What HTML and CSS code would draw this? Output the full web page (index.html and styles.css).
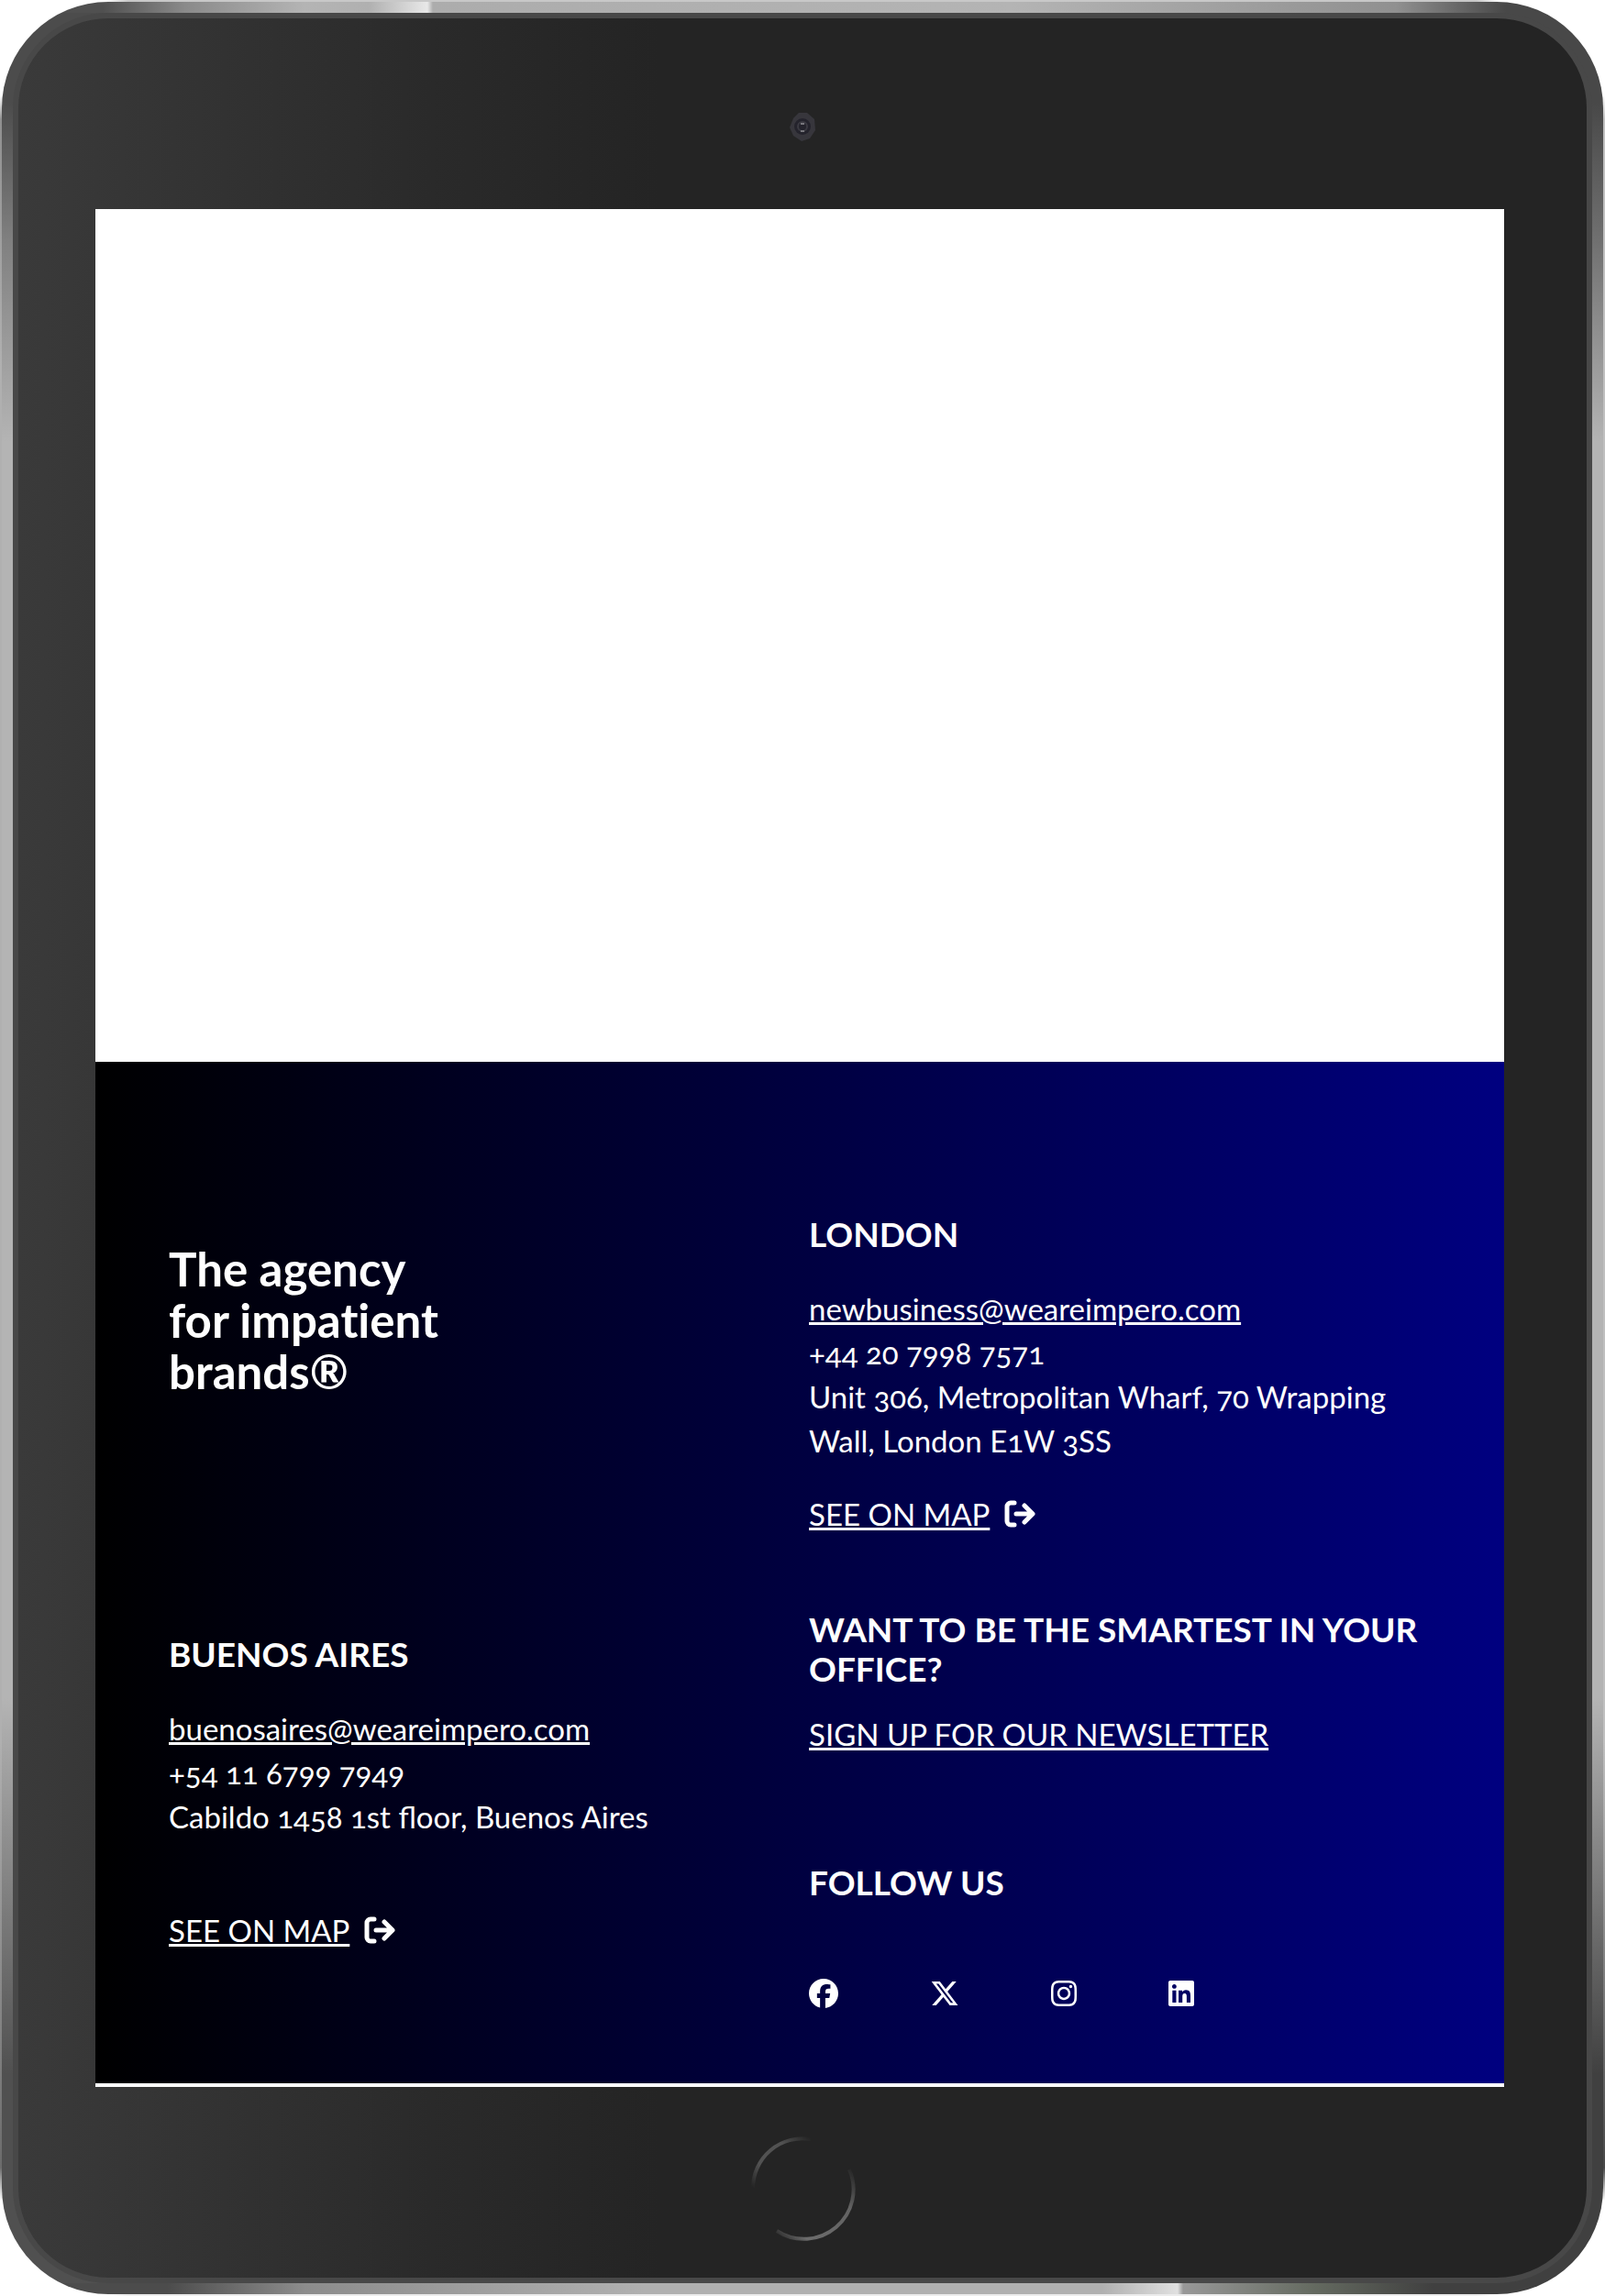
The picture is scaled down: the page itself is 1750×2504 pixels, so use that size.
FILE: index.html
```html
<!DOCTYPE html>
<html lang="en">
<head>
<meta charset="utf-8">
<meta name="viewport" content="width=device-width, initial-scale=1">
<title>Impero</title>
<link rel="stylesheet" href="styles.css">
</head>
<body>
<div class="tablet">
  <div class="rim">
    <div class="bezel">
      <div class="bezel-top">
        <svg class="camera" width="34" height="36" viewBox="0 0 34 36" aria-hidden="true">
          <path d="M13 2h9l8 7 1 12-6 9-9 3-9-6-4-9 4-10z" fill="#37363c"/>
          <circle cx="17" cy="17" r="9" fill="#24232c"/>
          <circle cx="17" cy="17" r="5" fill="none" stroke="#3b3a42" stroke-width="2"/>
          <path d="M15 14h4M15 22h4" stroke="#77767c" stroke-width="2"/>
        </svg>
      </div>
      <div class="screen">
        <main class="blank"></main>
        <footer class="footer">
          <div class="column column-left">
            <h1 class="tagline">The agency<br>for impatient<br>brands®</h1>
            <section class="office office-ba">
              <h2 class="heading">BUENOS AIRES</h2>
              <address class="details">
                <a href="mailto:buenosaires@weareimpero.com">buenosaires@weareimpero.com</a><br>
                +54 11 6799 7949<br>
                Cabildo 1458 1st floor, Buenos Aires
              </address>
              <p class="map"><a href="#map-ba">SEE ON MAP</a>
                <svg class="map-icon" width="34" height="30" viewBox="0 0 34 30" aria-hidden="true"><path d="M11 3H7a4 4 0 0 0-4 4v16a4 4 0 0 0 4 4h4M13 15h17M22 6l9 9-9 9"/></svg></p>
            </section>
          </div>
          <div class="column column-right">
            <section class="office">
              <h2 class="heading">LONDON</h2>
              <address class="details">
                <a href="mailto:newbusiness@weareimpero.com">newbusiness@weareimpero.com</a><br>
                +44 20 7998 7571<br>
                Unit 306, Metropolitan Wharf, 70 Wrapping<br>
                Wall, London E1W 3SS
              </address>
              <p class="map"><a href="#map-london">SEE ON MAP</a>
                <svg class="map-icon" width="34" height="30" viewBox="0 0 34 30" aria-hidden="true"><path d="M11 3H7a4 4 0 0 0-4 4v16a4 4 0 0 0 4 4h4M13 15h17M22 6l9 9-9 9"/></svg></p>
            </section>
            <section class="newsletter">
              <h2 class="heading">WANT TO BE THE SMARTEST IN YOUR<br>OFFICE?</h2>
              <p class="signup"><a href="#newsletter">SIGN UP FOR OUR NEWSLETTER</a></p>
            </section>
            <section class="follow">
              <h2 class="heading">FOLLOW US</h2>
              <nav class="social" aria-label="Social media">
                <a href="#facebook" aria-label="Facebook"><svg width="32" height="32" viewBox="0 0 512 512"><path d="M512 256C512 114.600 397.400 0 256 0S0 114.600 0 256c0 120 82.700 220.800 194.200 248.500V334.200h-52.800V256h52.800v-33.700c0-87.100 39.400-127.500 125-127.500 16.200 0 44.200 3.200 55.700 6.400V172c-6-.6-16.500-1-29.600-1-42 0-58.200 15.900-58.200 57.200V256h83.600l-14.400 78.200h-69.300v175.900C413.800 494.800 512 386.900 512 256z"/></svg></a>
                <a href="#x" aria-label="X"><svg width="32" height="32" viewBox="0 0 512 512"><path d="M389.200 48h70.600L305.600 224.200 487 464H345L233.700 318.600 106.500 464H35.800l164.900-188.500L26.800 48h145.600l100.500 132.900zm-24.800 373.800h39.100L151.100 88h-42z"/></svg></a>
                <a href="#instagram" aria-label="Instagram"><svg width="28" height="32" viewBox="0 0 448 512"><path d="M224.100 141c-63.600 0-114.900 51.300-114.900 114.900S160.500 370.800 224.100 370.800 339 319.500 339 255.900 287.700 141 224.100 141zm0 189.600c-41.100 0-74.700-33.500-74.700-74.700s33.500-74.700 74.700-74.700 74.700 33.500 74.700 74.700-33.600 74.700-74.700 74.700zm146.400-194.300c0 14.900-12 26.800-26.800 26.800-14.900 0-26.800-12-26.800-26.800s12-26.800 26.800-26.800 26.800 12 26.800 26.800zm76.100 27.200c-1.700-35.900-9.900-67.700-36.200-93.900-26.200-26.200-58-34.400-93.900-36.200-37-2.100-147.900-2.100-184.900 0-35.800 1.700-67.600 9.900-93.900 36.100s-34.400 58-36.200 93.900c-2.100 37-2.100 147.900 0 184.900 1.700 35.900 9.900 67.700 36.200 93.900s58 34.400 93.900 36.200c37 2.100 147.900 2.100 184.900 0 35.900-1.700 67.700-9.900 93.900-36.200 26.200-26.200 34.400-58 36.200-93.900 2.100-37 2.100-147.800 0-184.800zM398.800 388c-7.800 19.600-22.900 34.700-42.600 42.600-29.500 11.700-99.500 9-132.100 9s-102.700 2.600-132.100-9c-19.600-7.800-34.700-22.900-42.600-42.600-11.700-29.500-9-99.500-9-132.100s-2.600-102.700 9-132.100c7.800-19.600 22.900-34.700 42.600-42.600 29.500-11.700 99.500-9 132.100-9s102.700-2.600 132.100 9c19.600 7.800 34.700 22.900 42.600 42.600 11.700 29.500 9 99.500 9 132.100s2.700 102.700-9 132.100z"/></svg></a>
                <a href="#linkedin" aria-label="LinkedIn"><svg width="28" height="32" viewBox="0 0 448 512"><path d="M416 32H31.900C14.300 32 0 46.500 0 64.300v383.400C0 465.500 14.300 480 31.900 480H416c17.600 0 32-14.500 32-32.300V64.300c0-17.800-14.400-32.300-32-32.300zM135.400 416H69V202.200h66.500V416zm-33.200-243c-21.300 0-38.500-17.300-38.500-38.500S80.900 96 102.200 96c21.200 0 38.500 17.300 38.500 38.500 0 21.300-17.200 38.500-38.500 38.500zm282.100 243h-66.400V312c0-24.800-.5-56.700-34.500-56.700-34.600 0-39.900 27-39.900 54.900V416h-66.400V202.200h63.700v29.200h.9c8.900-16.800 30.600-34.500 62.900-34.500 67.200 0 79.700 44.300 79.700 101.900V416z"/></svg></a>
              </nav>
            </section>
          </div>
        </footer>
      </div>
      <div class="bezel-bottom">
        <svg class="home" width="116" height="116" viewBox="0 0 116 116" aria-hidden="true">
          <defs>
            <linearGradient id="arc-a" x1="0" y1="1" x2="1" y2="0"><stop offset="0" stop-color="#242424"/><stop offset=".3" stop-color="#525252"/><stop offset=".7" stop-color="#525252"/><stop offset="1" stop-color="#242424"/></linearGradient>
            <linearGradient id="arc-b" x1="1" y1="0" x2="0" y2="1"><stop offset="0" stop-color="#242424"/><stop offset=".3" stop-color="#626262"/><stop offset=".8" stop-color="#6c6c6c"/><stop offset="1" stop-color="#242424"/></linearGradient>
          </defs>
          <path d="M4 58A54 54 0 0 1 67 5" fill="none" stroke="url(#arc-a)" stroke-width="4"/>
          <path d="M109 38A54 54 0 0 1 30 105" fill="none" stroke="url(#arc-b)" stroke-width="4"/>
        </svg>
      </div>
    </div>
  </div>
</div>
</body>
</html>
```
FILE: styles.css
```css
* { box-sizing: border-box; }

body {
  margin: 0;
  background: #fff;
  color: #fff;
  font-family: Lato, sans-serif;
}

h1, h2, p { margin: 0; }
a { color: inherit; }

/* Tablet shell: the thin outer highlight shows between the rounded corners */
.tablet {
  padding: 2px;
  background:
    linear-gradient(90deg, transparent 114px, #c8c8c8 140px, #c8c8c8 calc(100% - 140px), transparent calc(100% - 114px)) top / 100% 2px no-repeat,
    linear-gradient(90deg, transparent 114px, #ececec 140px, #ececec calc(100% - 140px), transparent calc(100% - 114px)) bottom / 100% 2px no-repeat,
    linear-gradient(180deg, transparent 104px, #909090 130px, #b0b0b0 400px, #b0b0b0 1900px, #6c6c6c calc(100% - 140px), transparent calc(100% - 104px)) left / 2px 100% no-repeat,
    linear-gradient(180deg, transparent 104px, #c0c0c0 130px, #c0c0c0 1900px, #484848 calc(100% - 140px), transparent calc(100% - 104px)) right / 2px 100% no-repeat;
}

.rim {
  padding: 12px;
  border-radius: 116px;
  background:
    linear-gradient(90deg, #505050 110px, #8a8a8a 200px, #b4b4b4 330px, #b0b0b0 400px, #e8e8e8 464px, #acacac 470px, #b4b4b4 1100px, #909090 1520px, #484848 1640px) top / 100% 12px no-repeat,
    linear-gradient(90deg, #4c4c4c 180px, #8c8c8c 330px, #b0b0b0 700px, #b0b0b0 1200px, #e0e0e0 1282px, #989898 1288px, #646a60 1430px, #404040 1560px) bottom / 100% 12px no-repeat,
    linear-gradient(180deg, #4c4c4c 110px, #808080 260px, #b4b4b4 480px, #b4b4b4 1850px, #505050 2260px) left / 50% 100% no-repeat,
    linear-gradient(180deg, #484848 110px, #707070 260px, #b4b4b4 480px, #b4b4b4 1850px, #404040 2260px) right / 50% 100% no-repeat;
}

.bezel {
  border: 6px solid #484848;
  border-radius: 104px;
  background: linear-gradient(90deg, #3a3a3a, #2a2a2a 450px, #242424 700px);
}

.bezel-top,
.bezel-bottom {
  display: flex;
  justify-content: center;
  align-items: center;
  height: 208px;
}

.bezel-top { padding-top: 30px; }
.bezel-bottom { padding-top: 12px; }

.screen {
  margin: 0 90px 0 84px;
  background: #fff;
}

.blank { height: 930px; }

/* Footer */
.footer {
  display: grid;
  grid-template-columns: 698px 1fr;
  padding: 166px 0 82px 80px;
  background: linear-gradient(90deg, #000, #000080);
  border-bottom: 4px solid #fff;
}

.tagline {
  padding-top: 32px;
  font-size: 51px;
  line-height: 56px;
  font-variant-ligatures: none;
}

.heading {
  font-size: 37px;
  line-height: 43px;
}

.details {
  padding-top: 36px;
  font-size: 33px;
  font-style: normal;
  font-variant-numeric: oldstyle-nums;
  line-height: 48px;
}

.map {
  display: flex;
  align-items: center;
  gap: 16px;
  padding-top: 32px;
  font-size: 33px;
  line-height: 48px;
}

.map-icon {
  fill: none;
  stroke: #fff;
  stroke-width: 5;
  stroke-linecap: round;
  stroke-linejoin: round;
}

.office-ba { padding-top: 258px; }
.office-ba .map { padding-top: 76px; }
.newsletter { padding-top: 80px; }

.signup {
  padding-top: 26px;
  font-size: 33px;
  line-height: 48px;
}

.follow { padding-top: 116px; }

.social {
  display: flex;
  align-items: center;
  gap: 100px;
  padding-top: 84px;
}

.social a { display: flex; }
.social svg { fill: #fff; }
```
